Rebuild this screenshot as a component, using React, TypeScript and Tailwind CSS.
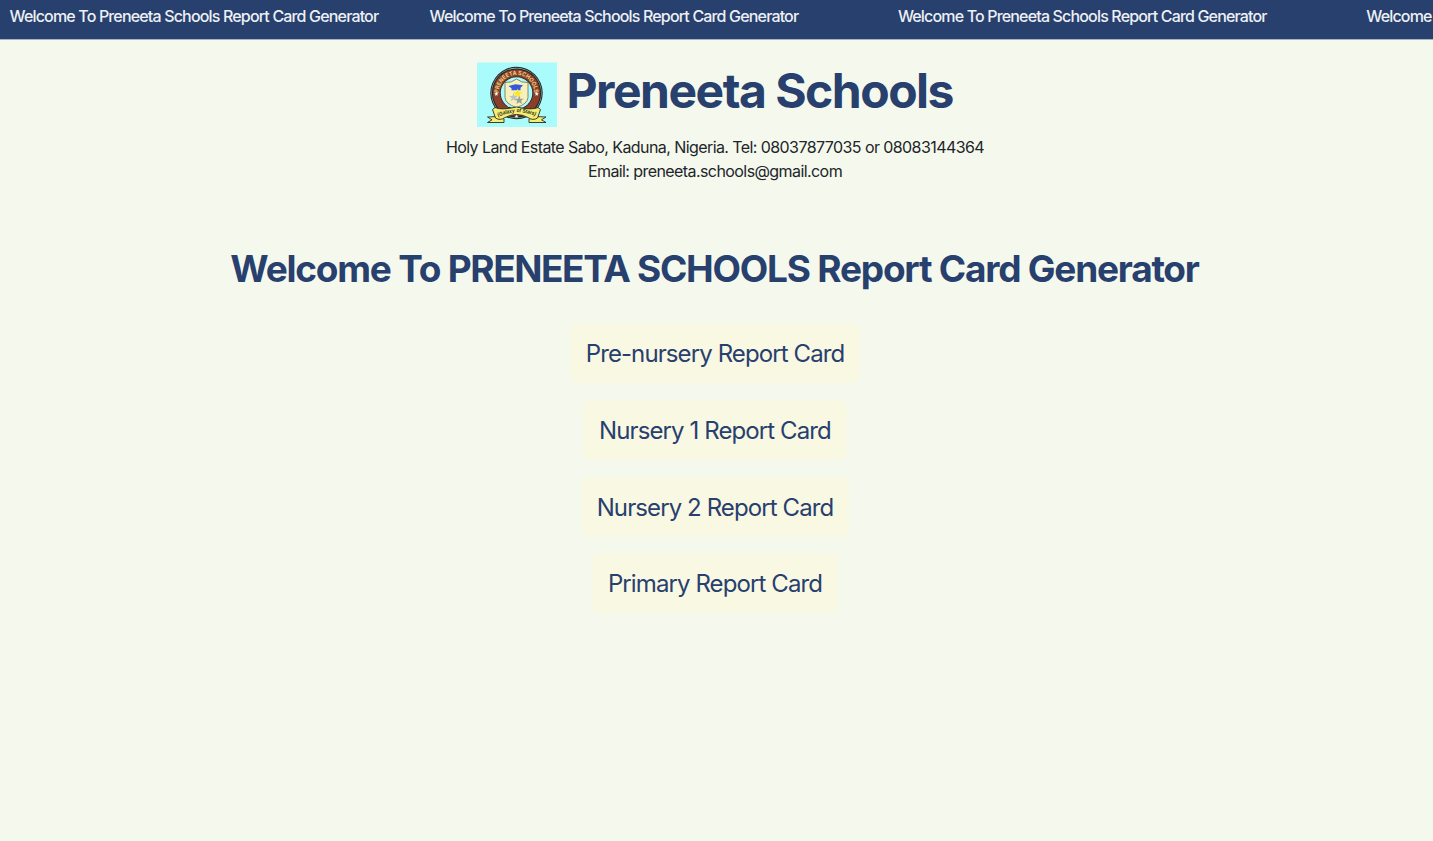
const links = ["Pre-nursery Report Card", "Nursery 1 Report Card", "Nursery 2 Report Card", "Primary Report Card"];
const banner = "Welcome To Preneeta Schools Report Card Generator";

function Star({ x, y, r, fill }: { x: number; y: number; r: number; fill: string }) {
  return <path transform={`translate(${x} ${y}) scale(${r})`} fill={fill} d="M0-1 .25-.32.95-.3.4.13.59.81 0 .42-.59.81-.4.13-.95-.3-.25-.32Z" />;
}

function Crest() {
  return (
    <svg width="80" height="65" viewBox="0 0 80 65" className="block shrink-0">
      <rect y="0.5" width="80" height="64.5" fill="#aafcfc" />
      <circle cx="39.5" cy="31" r="26.2" fill="#26221f" />
      <circle cx="39.5" cy="31" r="25.2" fill="#7fb4b0" />
      <circle cx="39.5" cy="31" r="24.6" fill="#26221f" />
      <circle cx="39.5" cy="31" r="23.6" fill="#8a3f2b" />
      <circle cx="39.5" cy="31" r="16.6" fill="#26221f" />
      <circle cx="39.5" cy="31" r="15.8" fill="#aafcfc" />
      <defs>
        <path id="arc" d="M22.5 36A17.8 17.8 0 1 1 56.5 36" />
        <path id="motto" d="M20.5 55.2Q28 51.5 39.5 50 51 50.5 60 54.5" />
      </defs>
      <text fontSize="5.8" fontWeight="700" fill="#ecd27c" fontFamily="Inter, sans-serif"><textPath href="#arc" startOffset="5" textLength="56" lengthAdjust="spacingAndGlyphs">PRENEETA SCHOOLS</textPath></text>
      <path d="M28 20.5Q34.5 21 39.5 17 44.5 21 51 20.5V35.5Q50.5 42 39.5 45.5 28.5 42 28 35.5Z" fill="#f6f0ba" stroke="#6e6b52" strokeWidth=".8" />
      <path d="m31.5 24 7-1.8 7.5 1-2.5 2.5v2.6H34.5v-2Z" fill="#3855dc" />
      <Star x={40.5} y={31.5} r={5} fill="#f8ea20" />
      <Star x={36.5} y={35.5} r={4.6} fill="#bec3bd" />
      <Star x={42.2} y={38.2} r={4.8} fill="#9a9e9e" />
      <Star x={19.3} y={32} r={2.3} fill="#fff" />
      <Star x={59.7} y={32} r={2.3} fill="#fff" />
      <g fill="#f5ee75" stroke="#282b20" strokeWidth=".9">
        <path d="M10.5 55 22 54.5 27 57V60.5H10.5L15 57.8Z" />
        <path d="M69 55 57 54.5 52 57V60.5H69L64.5 57.8Z" />
        <path d="M15.5 47.5 18 45.5Q24 48.5 39.5 45 55 48.5 61 45.5L63.5 47.5 60.5 56Q56 59 51 55.5 39.5 49.5 28 55.5 23 59 18.5 56Z" />
      </g>
      <Star x={39.5} y={54.5} r={2} fill="#fff" />
      <text fontSize="5.6" fontWeight="700" fontStyle="italic" fill="#292719" fontFamily="Liberation Sans, sans-serif"><textPath href="#motto" startOffset="1" textLength="38" lengthAdjust="spacingAndGlyphs">(Galaxy of Stars)</textPath></text>
    </svg>
  );
}

export default function App() {
  return (
    <div className="min-h-[841px] bg-[#f5f8ed] font-[Inter,sans-serif] text-[#27406e]">
      <div className="flex h-[40px] overflow-hidden border-b border-[#a9b4c3] bg-[#27406e] pl-[9.5px] whitespace-nowrap text-base font-medium text-[#eef0f5]">
        <p className="w-[420px] shrink-0 pt-1 tracking-[-0.835px]">{banner}</p>
        <p className="w-[468.4px] shrink-0 pt-1 tracking-[-0.835px]">{banner}</p>
        <p className="w-[468.4px] shrink-0 pt-1 tracking-[-0.835px]">{banner}</p>
        <p className="w-[468px] shrink-0 pt-1 tracking-[-0.835px]">{banner}</p>
      </div>
      <header className="flex flex-col items-center pt-[22px] pr-[3px]">
        <div className="flex h-[65px] gap-[9.5px]">
          <Crest />
          <h1 className="text-5xl leading-[58px] font-bold tracking-[-1.5px]">Preneeta Schools</h1>
        </div>
        <p className="mt-2 text-center text-base leading-6 tracking-[-0.58px] text-[#212529]">Holy Land Estate Sabo, Kaduna, Nigeria. Tel: 08037877035 or 08083144364<br />Email: preneeta.schools@gmail.com</p>
      </header>
      <main className="flex flex-col items-center pt-[63px] pr-[3px]">
        <h2 className="mr-px text-[37px] leading-[46px] font-bold tracking-[-1.22px]">Welcome To <span className="tracking-[-1.42px]">PRENEETA</span> SCHOOLS Report Card Generator</h2>
        <div className="mt-[31px] flex flex-col items-center gap-[16.8px]">
          {links.map((l) => <a key={l} className="rounded-lg bg-[#f9f8e3] px-4 pt-[12.95px] pb-[11.05px] text-2xl leading-9 tracking-[-0.9px]">{l}</a>)}
        </div>
      </main>
    </div>
  );
}
